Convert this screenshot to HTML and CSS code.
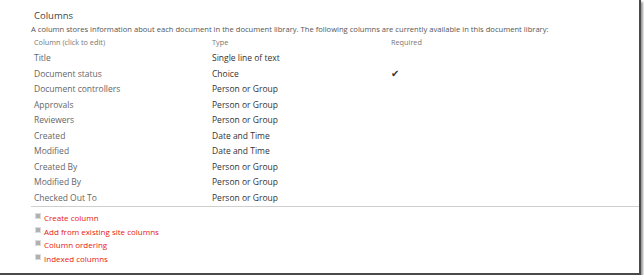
FILE: index.html
```html
<!DOCTYPE html>
<html>
    <head>
        <title>Columns</title>
        <meta charset="UTF-8">
        <link rel="stylesheet" href="styles.css">
    </head>
    <body>
        <div class="frame">
            <h2 class="title">Columns</h2>
            <p class="desc">A column stores information about each document in the document library. The following columns are currently available in this document library:</p>
            <div class="cols">
                <div class="row head">
                    <span>Column (click to edit)</span><span>Type</span><span>Required</span>
                </div>
                <div class="row"><span class="name">Title</span><span class="type">Single line of text</span><span></span></div>
                <div class="row"><span class="name">Document status</span><span class="type">Choice</span><span class="req">&#10004;</span></div>
                <div class="row"><span class="name">Document controllers</span><span class="type">Person or Group</span><span></span></div>
                <div class="row"><span class="name">Approvals</span><span class="type">Person or Group</span><span></span></div>
                <div class="row"><span class="name">Reviewers</span><span class="type">Person or Group</span><span></span></div>
                <div class="row"><span class="name">Created</span><span class="type">Date and Time</span><span></span></div>
                <div class="row"><span class="name">Modified</span><span class="type">Date and Time</span><span></span></div>
                <div class="row"><span class="name">Created By</span><span class="type">Person or Group</span><span></span></div>
                <div class="row"><span class="name">Modified By</span><span class="type">Person or Group</span><span></span></div>
                <div class="row"><span class="name">Checked Out To</span><span class="type">Person or Group</span><span></span></div>
            </div>
            <ul class="links">
                <li><a href="#">Create column</a></li>
                <li><a href="#">Add from existing site columns</a></li>
                <li><a href="#">Column ordering</a></li>
                <li><a href="#">Indexed columns</a></li>
            </ul>
        </div>
    </body>
</html>
```

FILE: styles.css
```css
*{
    box-sizing: border-box;
}
body{
    margin: 0;
    background-color: #ffffff;
    font-family: "Open Sans", sans-serif;
}
.frame{
    width: 641px;
    height: 275px;
    border-right: 2px solid #4a4a4a;
    border-bottom: 2px solid #4a4a4a;
    box-shadow: 2px 2px 2px #9a9a9a;
    padding-top: 9px;
}
.title{
    margin: 0 0 0 34px;
    font-size: 9.5px;
    font-weight: normal;
    color: #444;
    line-height: 14px;
}
.desc{
    margin: 0 0 0 31px;
    font-size: 7.6px;
    color: #555;
    line-height: 13px;
}
.cols{
    margin-left: 31px;
    border-bottom: 1px solid #cfcfcf;
    padding-bottom: 1px;
}
.row{
    display: grid;
    grid-template-columns: 181px 179px 1fr;
    height: 15.5px;
    line-height: 15.5px;
    font-size: 8.5px;
}
.row span:first-child{
    padding-left: 3px;
}
.row.head{
    font-size: 7.3px;
    color: #777;
    height: 12px;
    line-height: 12px;
    margin-bottom: 2px;
}
.name{
    color: #666;
}
.type{
    color: #333;
}
.req{
    color: #333;
    font-size: 10px;
}
.links{
    list-style: none;
    margin: 4px 0 0 35px;
    padding: 0;
}
.links li{
    height: 13.5px;
    line-height: 13.5px;
    font-size: 8px;
}
.links li::before{
    content: "";
    display: inline-block;
    width: 4px;
    height: 4px;
    background-color: #b0b0b0;
    border: 1px solid #dcdcdc;
    margin-right: 3px;
    vertical-align: 2px;
}
.links a{
    color: #e8170f;
    text-decoration: none;
}
```
